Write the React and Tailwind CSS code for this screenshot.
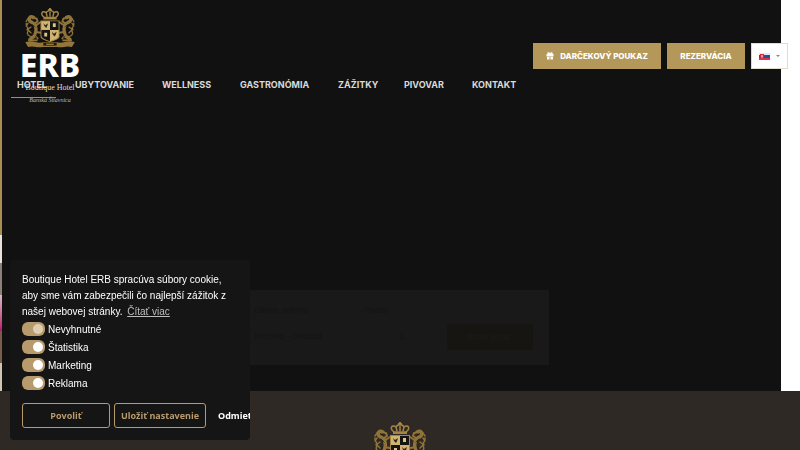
import { useState } from 'react';

const NAV = [
  { label: 'HOTEL', width: 'w-[58px]', active: true },
  { label: 'UBYTOVANIE', width: 'w-[87px]' },
  { label: 'WELLNESS', width: 'w-[78px]' },
  { label: 'GASTRONÓMIA', width: 'w-[98px]' },
  { label: 'ZÁŽITKY', width: 'w-[66px]' },
  { label: 'PIVOVAR', width: 'w-[68px]' },
  { label: 'KONTAKT', width: 'w-[60px]' },
];

const COOKIES = [
  { id: 'necessary', label: 'Nevyhnutné', locked: true },
  { id: 'statistics', label: 'Štatistika' },
  { id: 'marketing', label: 'Marketing' },
  { id: 'ads', label: 'Reklama' },
];

// One supporter of the crest, mirrored for the other side
function Lion() {
  return (
    <g fill="none" stroke="#8f7338" strokeLinecap="round" strokeLinejoin="round">
      <path d="M10 10c-4-2-6 1-4 4l5 3c1 3 2 5 1 8l-2 5-4 3" strokeWidth="3.6" />
      <path d="M9 11l4 0 1 3-3 2M11 19l6-4M11 25l6 1M10 28l4 4" strokeWidth="2" />
      <path d="M9 30c-5 0-7-3-5-6s-3-4-2-8M4 11l-2 3M4 16l-2 3M7 20l-4 3M3 22l4 4" strokeWidth="1.4" />
      <path d="M5 34h8" strokeWidth="2" />
      <path d="M9 12l2 0M8 17l3 3M10 24l-1 4M12 30l1 2" stroke="#1d1912" strokeWidth=".8" />
    </g>
  );
}

function Crest({ className }) {
  return (
    <svg viewBox="0 0 54 42" className={className} aria-hidden="true">
      <Lion />
      <g transform="translate(54 0) scale(-1 1)">
        <Lion />
      </g>
      <g fill="none" stroke="#a48544" strokeWidth="1.5">
        <path d="M21 10c-5-4-2-8 2-5 1-3 7-3 8 0 4-3 7 1 2 5zM24 9l-1-4M27 9V4M30 9l1-4" />
        <path d="M20 11h14" strokeWidth="2" />
      </g>
      <path d="M26 0h2v1h1v2h-4V1h1z" fill="#a48544" />
      <path d="M17 13h20v17c0 3-5 4-10 6-5-2-10-3-10-6z" fill="#a48544" />
      <path d="M18 14h9v9h-9z" fill="#d0b472" />
      <path d="M27 23h9v6c0 3-4 4-9 6z" fill="#d0b472" />
      <path d="M27 14h9v9h-9zM18 23h9v12c-5-2-9-3-9-6z" fill="#151412" />
      <path d="M20 16l2 2 3-2-1 3-1 2-2-2zM29 25l2 2 3-2-1 3-1 2-2-2z" fill="#2e2617" />
      <path d="M30 16h3v4h-3zM21 26h3v4h-3z" fill="#d8c48f" />
      <path d="M1 36c8-3 12 2 19 0h14c7 2 11-3 19 0l-3 5c-6-2-9 1-15 0H19c-6 1-9-2-15 0z" fill="#92763a" />
      <path d="M20 38h14" stroke="#1f1b13" strokeWidth="3" />
      <path d="M23 38h8" stroke="#c9a85e" />
    </svg>
  );
}

function Logo() {
  return (
    <a href="#home" aria-label="ERB Boutique Hotel" className="absolute top-2 left-2 block w-20 text-center whitespace-nowrap text-white">
      <Crest className="mx-auto h-[40px] w-[54px]" />
      <span className="mt-px block font-['Noto_Sans',sans-serif] text-[32px] leading-8 font-extrabold">ERB</span>
      <span className="mt-px block font-['Liberation_Serif',serif] text-[8px] leading-3 text-[#dddddd]">Boutique Hotel</span>
      <span className="block font-['Liberation_Serif',serif] text-[6px] leading-3 text-[#bbbbbb] italic">Banská Štiavnica</span>
    </a>
  );
}

function GiftIcon() {
  return (
    <svg viewBox="0 0 16 16" className="h-2 w-2" fill="currentColor" aria-hidden="true">
      <path d="M1 4h2C1 0 7-1 8 3c1-4 7-3 5 1h2v5H1zM2 10h5v5H2zM9 10h5v5H9z" />
    </svg>
  );
}

function SlovakFlag() {
  return (
    <svg viewBox="0 0 11 7" className="h-[7px] w-[11px]" aria-hidden="true">
      <path d="M0 0h11v7H0z" fill="#e6e8ef" />
      <path d="M0 2h11v3H0z" fill="#22519f" />
      <path d="M0 5h11v2H0z" fill="#e3314a" />
      <path d="M1 1h4v3L3 6 1 4z" fill="#d42b45" />
      <path d="M3 2v3M2 3h2" stroke="#fff" strokeWidth=".6" />
    </svg>
  );
}

function Header() {
  return (
    <header className="pt-[43px]">
      <div className="-mr-[7px] flex h-[26px] justify-end gap-[6px] text-[8px] font-extrabold text-white">
        <a href="#voucher" className="flex w-32 items-center justify-center gap-[6px] bg-[#b4985a]">
          <GiftIcon />
          DARČEKOVÝ POUKAZ
        </a>
        <a href="#booking" className="flex w-[78px] items-center justify-center bg-[#b4985a]">REZERVÁCIA</a>
        <button aria-label="Slovenčina" aria-haspopup="listbox" className="flex w-[37px] items-center justify-center gap-[6px] border border-[#e2dccb] bg-white">
          <SlovakFlag />
          <svg viewBox="0 0 4 2" className="h-[2px] w-1" aria-hidden="true">
            <path d="M0 0h4L2 2z" fill="#888" />
          </svg>
        </button>
      </div>
      <nav className="flex pt-[6px] pl-[9px] text-[9px] font-bold text-[#dadada]">
        {NAV.map(({ label, width, active }) => (
          <div key={label} className={`${width} flex`}>
            <a href="#menu" className={`min-w-[45px] border-b px-[6px] pb-[3px] leading-[19px] ${active ? 'border-[#a98e52]' : 'border-transparent'}`}>{label}</a>
          </div>
        ))}
      </nav>
    </header>
  );
}

function BookingForm() {
  return (
    <form className="mx-auto mt-auto mb-[26px] flex h-[75px] w-[314px] bg-[#191919] pl-[20px] text-[8px] text-[#141414]">
      <label className="w-[110px] pt-[14px]">
        Dátum pobytu
        <input readOnly defaultValue="Príchod - Odchod" className="mt-[14px] block w-full" />
      </label>
      <label className="w-[82px] pt-[14px]">
        Osoby
        <input readOnly defaultValue="2" className="mt-[14px] block w-10 text-right" />
      </label>
      <button type="button" className="mt-[34px] h-[26px] w-[86px] bg-[#161512] font-bold text-[#1a1917]">Rezervovať</button>
    </form>
  );
}

function CookiePanel() {
  const [allowed, setAllowed] = useState({ necessary: true, statistics: true, marketing: true, ads: true });

  return (
    <section aria-label="Cookies" className="fixed bottom-[10px] left-[10px] w-60 overflow-hidden rounded bg-[#151515] p-3 font-['Liberation_Sans',sans-serif] text-[10px] text-white">
      <p className="leading-4">
        Boutique Hotel ERB spracúva súbory cookie, aby sme vám zabezpečili čo najlepší zážitok z našej webovej stránky.{' '}
        <a href="#cookies" className="ml-[2px] text-[#bdbdbd] underline">Čítať viac</a>
      </p>
      <div>
        {COOKIES.map(({ id, label, locked }) => (
          <label key={id} className="relative flex h-[18px] items-center gap-[3px]">
            <input
              type="checkbox"
              checked={allowed[id]}
              disabled={locked}
              onChange={e => setAllowed({ ...allowed, [id]: e.target.checked })}
              className="sr-only"
            />
            <span className={`flex h-[14px] w-[23px] items-center rounded-[6px] bg-[#b79b6c] px-[2px] ${allowed[id] ? 'justify-end' : 'justify-start'}`}>
              <span className={`h-[10px] w-[10px] rounded-full ${locked ? 'bg-[#dfceb2]' : 'bg-white'}`}></span>
            </span>
            {label}
          </label>
        ))}
      </div>
      <div className="mt-[11px] flex gap-1 font-['Open_Sans',sans-serif] text-[9px] font-bold whitespace-nowrap">
        <button className="h-[25px] w-[88px] shrink-0 rounded-[3px] border border-[#b79b6c] text-[#b79b6c]">Povoliť</button>
        <button className="h-[25px] w-[92px] shrink-0 rounded-[3px] border border-[#b79b6c] text-[#b79b6c]">Uložiť nastavenie</button>
        <button className="h-[25px] shrink-0 px-2">Odmietnuť</button>
      </div>
    </section>
  );
}

export default function App() {
  return (
    <div className="flex h-screen flex-col overflow-hidden bg-white font-['Inter',sans-serif]">
      <div className="flex flex-1">
        <div className="flex w-[2px] flex-col">
          <div className="h-[235px] bg-[#a98e52]"></div>
          <div className="h-7 bg-[#e8e2da]"></div>
          <div className="h-8 bg-[#8d8078]"></div>
          <div className="h-9 bg-linear-to-b from-[#d9b8c4] to-[#b0146e]"></div>
          <div className="h-8 bg-[#7a5c4a]"></div>
          <div className="flex-1 bg-[#cfc3b4]"></div>
        </div>
        <div className="relative mr-[19px] flex flex-1 flex-col bg-[#111111]">
          <Header />
          <BookingForm />
          <Logo />
        </div>
      </div>
      <section className="h-[59px] bg-[#2f2925] pt-[31px]">
        <Crest className="mx-auto h-[42px] w-[56px]" />
      </section>
      <CookiePanel />
    </div>
  );
}
